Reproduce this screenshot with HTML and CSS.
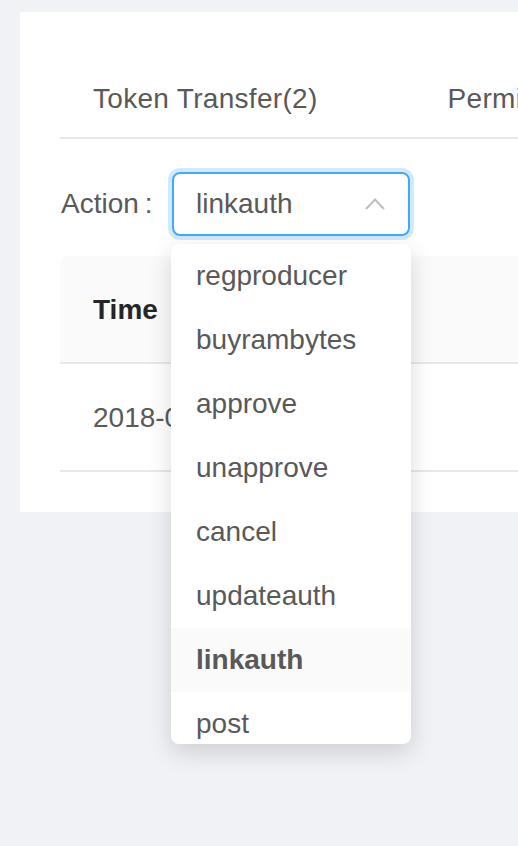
FILE: index.html
```html
<!DOCTYPE html>
<html>
<head>
<meta charset="utf-8">
<link rel="stylesheet" href="styles.css">
</head>
<body>
<div class="card">
  <div class="tabs">
    <div class="tab">Token Transfer(2)</div>
    <div class="tab">Permissions</div>
  </div>
  <div class="form-row">
    <label class="label">Action<span class="colon">:</span></label>
    <div class="select">
      <span class="select-value">linkauth</span>
      <svg class="arrow" width="20" height="12" viewBox="0 0 20 12"><polyline points="1,11 10,1.5 19,11" fill="none" stroke="#bfbfbf" stroke-width="2"/></svg>
      <div class="dropdown">
        <div class="item">regproducer</div>
        <div class="item">buyrambytes</div>
        <div class="item">approve</div>
        <div class="item">unapprove</div>
        <div class="item">cancel</div>
        <div class="item">updateauth</div>
        <div class="item selected">linkauth</div>
        <div class="item">post</div>
      </div>
    </div>
  </div>
  <div class="table">
    <div class="thead">
      <div class="th">Time</div>
    </div>
    <div class="tr">
      <div class="td">2018-06-15</div>
    </div>
  </div>
</div>
</body>
</html>
```

FILE: styles.css
```css
html {
  overflow: hidden;
  background: #f0f2f5;
}

body {
  margin: 0;
  padding: 0;
  background: #f0f2f5;
  min-height: 846px;
  font-family: "Liberation Sans", Arial, sans-serif;
  font-size: 28px;
  color: #595959;
}

.card {
  margin: 12px 0 0 20px;
  background: #fff;
  height: 500px;
  padding-left: 40px;
  box-sizing: border-box;
}

.tabs {
  display: flex;
  white-space: nowrap;
  padding-top: 65px;
  border-bottom: 2px solid #e8e8e8;
  overflow: hidden;
}

.tab {
  padding: 0 33px 16px 33px;
  line-height: 44px;
  margin-right: 64px;
  color: #595959;
  letter-spacing: 0.3px;
}

.form-row {
  display: flex;
  align-items: center;
  margin-top: 33px;
}

.label {
  width: 112px;
  line-height: 44px;
  color: #595959;
  padding-left: 1px;
  box-sizing: border-box;
}

.colon {
  margin-left: 6px;
}

.select {
  position: relative;
  width: 238px;
  height: 64px;
  box-sizing: border-box;
  border: 2px solid #40a9ff;
  border-radius: 8px;
  box-shadow: 0 0 0 4px rgba(24, 144, 255, 0.2);
  display: flex;
  align-items: center;
  padding-left: 22px;
}

.select-value {
  line-height: 60px;
  color: #595959;
  flex: 1;
}

.arrow {
  margin-right: 23px;
  margin-top: -1px;
}

.dropdown {
  position: absolute;
  left: -3px;
  top: 70px;
  width: 240px;
  height: 500px;
  background: #fff;
  border-radius: 8px;
  box-shadow: 0 8px 24px rgba(0, 0, 0, 0.15);
  overflow: hidden;
  z-index: 10;
}

.item {
  height: 64px;
  box-sizing: border-box;
  padding: 10px 25px;
  line-height: 44px;
  color: #595959;
  white-space: nowrap;
}

.item.selected {
  background: #fafafa;
  font-weight: 700;
}

.table {
  margin-top: 20px;
}

.thead {
  display: flex;
  background: #fafafa;
  border-top-left-radius: 8px;
  border-bottom: 2px solid #e8e8e8;
}

.th {
  padding: 32px 33px 30px 33px;
  line-height: 44px;
  font-weight: 700;
  color: #262626;
  white-space: nowrap;
}

.tr {
  border-bottom: 2px solid #e8e8e8;
}

.td {
  padding: 32px 33px 30px 33px;
  line-height: 44px;
  color: #595959;
  white-space: nowrap;
}
```
